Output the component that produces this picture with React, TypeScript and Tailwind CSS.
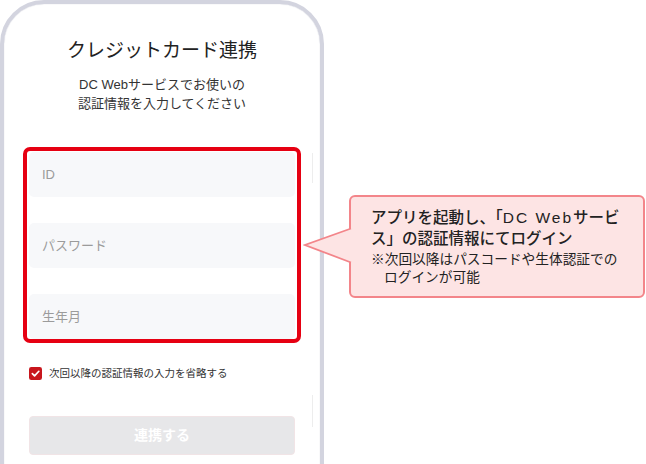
import React from 'react';

// Latin glyphs from Liberation Sans (Helvetica widths), Japanese from Noto CJK
const FONT = { fontFamily: '"Liberation Sans", "Noto Sans CJK JP", "Noto Sans", sans-serif' };

const FIELDS = ['ID', 'パスワード', '生年月'];

function CheckIcon() {
  return (
    <svg viewBox="0 0 14 14" className="h-[13px] w-[13px]">
      <rect x="0" y="0" width="14" height="14" rx="2.5" fill="#c8161d" />
      <path d="M3.6 7.2 L6 9.6 L10.6 4.6" fill="none" stroke="#fff" strokeWidth="1.8" strokeLinecap="round" strokeLinejoin="round" />
    </svg>
  );
}

function Phone() {
  return (
    <div className="relative h-[520px] w-[324px] shrink-0 rounded-[44px] border-4 border-[#d3d4df] bg-white px-[19px] pt-[33px] shadow-[inset_0_0_1px_#bfc0cd]">
      <h1 className="text-center text-[19px] leading-[28px] font-normal text-[#222]">クレジットカード連携</h1>
      <p className="mt-[10px] text-center text-[13px] leading-[19px] text-[#333]">
        DC Webサービスでお使いの
        <br />
        認証情報を入力してください
      </p>

      <div className="mt-[34px] flex h-[196px] flex-col gap-[26px] rounded-[7px] border-4 border-[#e60012] px-[2px] pt-[1px]">
        {FIELDS.map((f) => (
          <input
            key={f}
            placeholder={f}
            className="h-[45px] w-full shrink-0 rounded-[5px] bg-[#f7f8fa] px-[13px] text-[13px] text-[#333] outline-none placeholder:text-[#9b9b9b]"
          />
        ))}
      </div>

      <label className="mt-[24px] ml-[6px] flex items-center gap-[7px]">
        <CheckIcon />
        <span className="text-[10.5px] leading-[13px] text-[#333]">次回以降の認証情報の入力を省略する</span>
      </label>

      <button
        type="button"
        className="mt-[36px] ml-[6px] h-[39px] w-[266px] rounded-[4px] border border-[#f1e4e6] bg-[#e7e7e9] text-[14px] font-bold text-white"
      >
        連携する
      </button>

      <div className="absolute top-[149px] left-[308px] h-[30px] w-px bg-[#ededed]" />
      <div className="absolute top-[391px] left-[308px] h-[32px] w-px bg-[#ededed]" />
    </div>
  );
}

function Callout() {
  return (
    <div className="relative mt-[195px] ml-[25px] h-[103px] w-[296px] rounded-[6px] border-2 border-[#f3858a] bg-[#fde4e4] pt-[10px] pl-[20px] text-[#222]">
      <svg className="absolute top-[30px] left-[-48px]" width="50" height="40" viewBox="0 0 50 40">
        <polygon points="50,1 2,18 50,36" fill="#fde4e4" />
        <polyline points="48,1.5 2,18 48,35.5" fill="none" stroke="#f3858a" strokeWidth="1.8" strokeLinejoin="miter" />
      </svg>
      <p className="relative text-[15.5px] leading-[21px] font-medium">
        アプリを起動し、「<span className="tracking-[2px]">DC Web</span>サービ
        <br />
        ス」の認証情報にてログイン
      </p>
      <p className="relative mt-[2px] text-[13.7px] leading-[18px]">※次回以降はパスコードや生体認証での</p>
      <p className="relative pl-[13px] text-[13.7px] leading-[18px]">ログインが可能</p>
    </div>
  );
}

export default function App() {
  return (
    <div style={FONT} className="flex h-[464px] w-[646px] items-start overflow-hidden bg-white">
      <Phone />
      <Callout />
    </div>
  );
}
